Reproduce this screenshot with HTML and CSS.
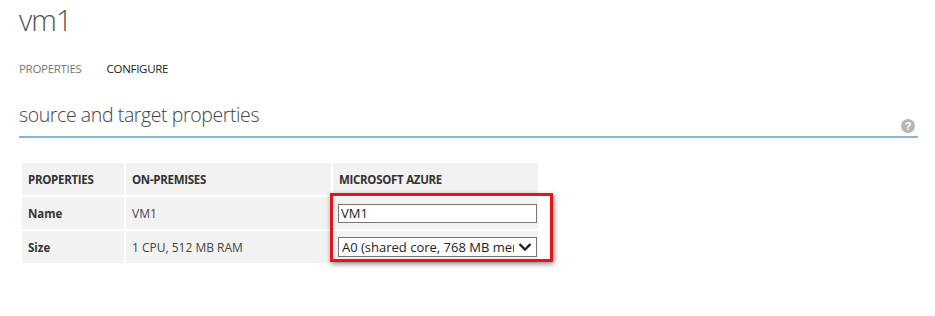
FILE: index.html
```html
<!DOCTYPE html>
<html lang="en">

<head>
    <meta charset="UTF-8">
    <meta name="viewport" content="width=device-width, initial-scale=1.0">
    <title>vm1</title>
    <link rel="stylesheet" href="styles.css">
</head>

<body>
    <div class="page">
        <h1 class="title">vm1</h1>

        <div class="tabs">
            <span class="tab">PROPERTIES</span>
            <span class="tab active">CONFIGURE</span>
        </div>

        <div class="section-head">
            <h2>source and target properties</h2>
            <span class="help">?</span>
        </div>

        <div class="table-wrap">
            <table class="props">
                <thead>
                    <tr>
                        <th class="col-prop">PROPERTIES</th>
                        <th class="col-onprem">ON-PREMISES</th>
                        <th class="col-azure">MICROSOFT AZURE</th>
                    </tr>
                </thead>
                <tbody>
                    <tr>
                        <td class="label">Name</td>
                        <td>VM1</td>
                        <td class="edit"><input type="text" class="field" value="VM1"></td>
                    </tr>
                    <tr>
                        <td class="label">Size</td>
                        <td>1 CPU, 512 MB RAM</td>
                        <td class="edit">
                            <div class="select">
                                <span class="select-text">A0 (shared core, 768 MB memory)</span>
                                <svg class="chev" width="14" height="10" viewBox="0 0 14 10">
                                    <path d="M1.5 2 L7 7.5 L12.5 2" fill="none" stroke="#222" stroke-width="2.4"/>
                                </svg>
                            </div>
                        </td>
                    </tr>
                </tbody>
            </table>
            <!-- highlight around the azure column -->
            <div class="highlight"></div>
        </div>
    </div>
</body>

</html>
```

FILE: styles.css
```css
body {
    margin: 0;
    background-color: white;
    font-family: "Open Sans", "Noto Sans", sans-serif;
    color: #333;
}
.page {
    padding: 0 17px 0 19px;
    min-height: 316px;
}
.title {
    margin: 0;
    padding-top: 2px;
    font-size: 29px;
    font-weight: 300;
    color: #555;
    line-height: 36px;
    letter-spacing: -1px;
}
.tabs {
    display: flex;
    gap: 25px;
    margin-top: 23px;
    font-size: 11.5px;
    line-height: 16px;
}
.tab {
    color: #777;
    letter-spacing: -0.3px;
}
.tab.active {
    color: #222;
}
.section-head {
    display: flex;
    justify-content: space-between;
    align-items: flex-end;
    margin-top: 12px;
    border-bottom: 2px solid #8cb5dc;
    height: 47px;
}
.section-head h2 {
    margin: 0;
    padding-bottom: 8px;
    font-size: 19.5px;
    font-weight: 300;
    color: #444;
    letter-spacing: -0.4px;
}
.help {
    width: 14px;
    height: 14px;
    border-radius: 50%;
    background-color: #b5b5b5;
    color: white;
    font-size: 11px;
    font-weight: bold;
    line-height: 14px;
    text-align: center;
    margin: 0 3px 3px 0;
    font-family: "Liberation Sans", Arial, sans-serif;
}
.table-wrap {
    position: relative;
    margin: 23px 0 0 0;
}
.props {
    border-collapse: collapse;
    font-size: 11.5px;
    margin-left: 1px;
}
.props th,
.props td {
    background-color: #f2f2f2;
    border: 2px solid white;
    padding: 0 6px;
    text-align: left;
    height: 32px;
    color: #444;
}
.props td {
    font-size: 12px;
}
.props th {
    font-weight: bold;
    color: #333;
    letter-spacing: -0.3px;
}
.props td.label {
    font-weight: bold;
    color: #333;
    font-size: 11.5px;
}
.props td.edit {
    padding: 0 1px 0 5px;
}
.col-prop {
    width: 90px;
}
.col-onprem {
    width: 193px;
}
.col-azure {
    width: 192px;
}
.field {
    box-sizing: border-box;
    width: 199px;
    height: 19px;
    margin: 0;
    border: 1px solid #777;
    padding: 0 2px;
    font-family: inherit;
    font-size: 13px;
    color: #222;
    display: block;
}
.select {
    box-sizing: border-box;
    width: 199px;
    height: 20px;
    border: 1px solid #777;
    background-color: white;
    display: flex;
    align-items: center;
    padding: 0 4px 0 3px;
    gap: 4px;
}
.select-text {
    flex: 1;
    overflow: hidden;
    white-space: nowrap;
    font-size: 13px;
    color: #222;
}
.chev {
    flex: none;
}
.highlight {
    position: absolute;
    left: 311px;
    top: 32px;
    width: 217px;
    height: 63px;
    border: 3px solid #e8141a;
    box-shadow: 1px 2px 5px rgba(0, 0, 0, 0.45);
}
```
